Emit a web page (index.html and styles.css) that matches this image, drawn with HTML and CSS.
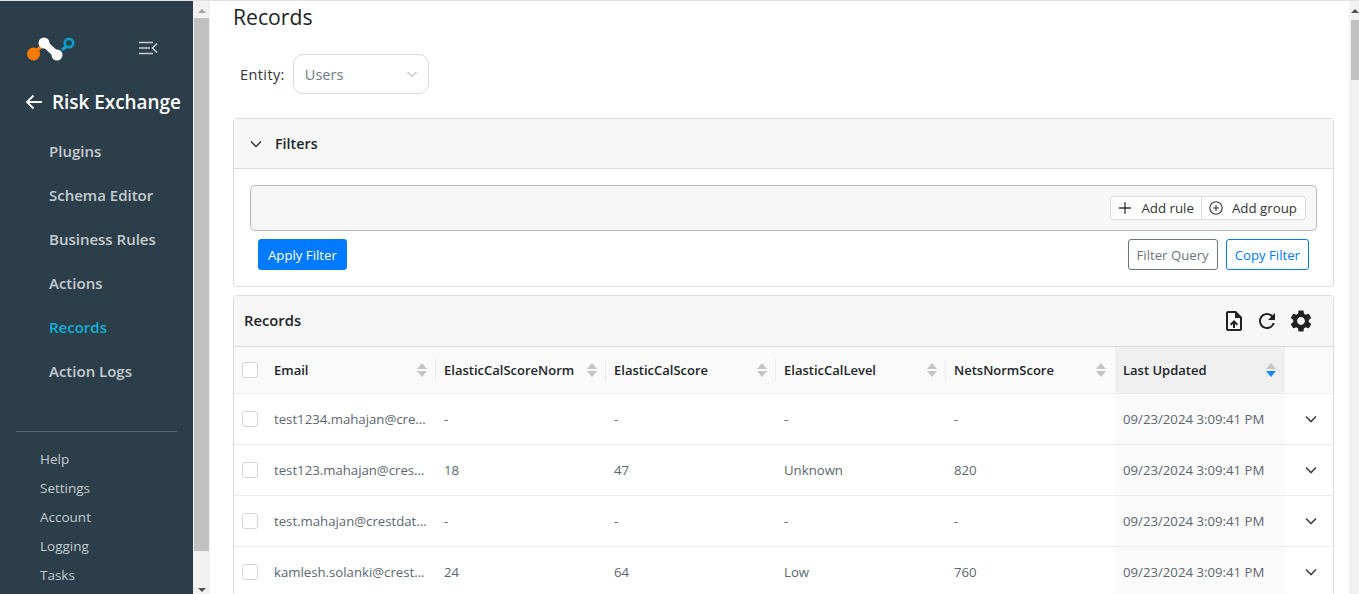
FILE: index.html
```html
<!DOCTYPE html>
<html>
<head>
    <title>Records</title>
    <link rel="stylesheet" href="styles.css">
</head>
<body>
    <div id="app">
        <div id="sidebar">
            <div class="brand">
                <svg class="logo" width="50" height="26" viewBox="0 0 50 26">
                    <path d="M7 19 L17 10" stroke="#f57c00" stroke-width="3.500" fill="none"/>
                    <circle cx="7.500" cy="19" r="6.500" fill="#f57c00"/>
                    <path d="M18 8 L31 20" stroke="#fff" stroke-width="7" fill="none"/>
                    <circle cx="18" cy="8" r="5.500" fill="#fff"/>
                    <circle cx="31" cy="20" r="5.500" fill="#fff"/>
                    <path d="M36 15 L41 11" stroke="#0a9cc4" stroke-width="3.500" fill="none"/>
                    <circle cx="43" cy="8" r="4.200" fill="none" stroke="#0a9cc4" stroke-width="2.800"/>
                </svg>
                <svg class="collapse" width="19" height="14" viewBox="0 0 19 14">
                    <path d="M0 1.500H14M0 7H11M0 12.500H14" stroke="#c9ced2" stroke-width="1.600" fill="none"/>
                    <path d="M18 2.500L13.500 7L18 11.500" stroke="#c9ced2" stroke-width="1.600" fill="none"/>
                </svg>
            </div>
            <div class="back">
                <svg width="18" height="16" viewBox="0 0 18 16">
                    <path d="M17 8H2M8.500 1.500L2 8L8.500 14.500" stroke="#fff" stroke-width="1.800" fill="none"/>
                </svg>
                <span>Risk Exchange</span>
            </div>
            <div class="nav">
                <a>Plugins</a>
                <a>Schema Editor</a>
                <a>Business Rules</a>
                <a>Actions</a>
                <a class="active">Records</a>
                <a>Action Logs</a>
            </div>
            <div class="subnav">
                <a>Help</a>
                <a>Settings</a>
                <a>Account</a>
                <a>Logging</a>
                <a>Tasks</a>
            </div>
        </div>
        <div class="scroll scroll-side">
            <span class="arrow-up"></span>
            <span class="thumb"></span>
            <span class="arrow-down"></span>
        </div>
        <div id="main">
            <h1>Records</h1>
            <div class="entity">
                <label>Entity:</label>
                <div class="select">
                    <span>Users</span>
                    <svg width="10" height="7" viewBox="0 0 10 7"><path d="M.5 1L5 5.500L9.500 1" stroke="#c4c4c4" stroke-width="1.100" fill="none"/></svg>
                </div>
            </div>

            <div class="card">
                <div class="card-head filters-head">
                    <svg width="12" height="8" viewBox="0 0 12 8"><path d="M1 1.500L6 6.500L11 1.500" stroke="#333" stroke-width="1.300" fill="none"/></svg>
                    <span>Filters</span>
                </div>
                <div class="filters-body">
                    <div class="query">
                        <div class="query-btns">
                            <button>
                                <svg width="14" height="14" viewBox="0 0 14 14"><path d="M7 1V13M1 7H13" stroke="#333" stroke-width="1.300"/></svg>
                                Add rule
                            </button>
                            <button>
                                <svg width="14" height="14" viewBox="0 0 14 14"><circle cx="7" cy="7" r="6.200" fill="none" stroke="#333" stroke-width="1.100"/><path d="M7 4V10M4 7H10" stroke="#333" stroke-width="1.100"/></svg>
                                Add group
                            </button>
                        </div>
                    </div>
                    <div class="filter-actions">
                        <button class="btn btn-primary">Apply Filter</button>
                        <div class="filter-right">
                            <button class="btn btn-grey">Filter Query</button>
                            <button class="btn btn-blue">Copy Filter</button>
                        </div>
                    </div>
                </div>
            </div>

            <div class="card records">
                <div class="card-head records-head">
                    <span>Records</span>
                    <div class="tools">
                        <svg width="24" height="24" viewBox="0 0 24 24"><path d="M14 2H6c-1.100 0-2 .9-2 2v16c0 1.100.9 2 2 2h12c1.100 0 2-.9 2-2V8l-6-6zm4 18H6V4h7v5h5v11zM8 15.010l1.410 1.410L11 14.840V19h2v-4.160l1.590 1.590L16 15.010 12.010 11z" fill="#212121"/></svg>
                        <svg width="24" height="24" viewBox="0 0 24 24"><path d="M17.650 6.350A7.958 7.958 0 0 0 12 4c-4.420 0-7.990 3.580-7.990 8s3.570 8 7.990 8c3.730 0 6.840-2.550 7.730-6h-2.080A5.990 5.990 0 0 1 12 18c-3.310 0-6-2.690-6-6s2.690-6 6-6c1.660 0 3.140.69 4.220 1.780L13 11h7V4l-2.350 2.350z" fill="#212121"/></svg>
                        <svg width="26" height="26" viewBox="0 0 24 24"><path d="M19.140 12.940c.04-.3.06-.61.06-.94 0-.32-.02-.64-.07-.94l2.030-1.580a.49.49 0 0 0 .12-.61l-1.920-3.320a.488.488 0 0 0-.59-.22l-2.390.96c-.5-.38-1.030-.7-1.620-.94l-.36-2.540a.484.484 0 0 0-.48-.41h-3.840c-.24 0-.43.17-.47.41l-.36 2.540c-.59.24-1.130.57-1.620.94l-2.390-.96c-.22-.08-.47 0-.59.22L2.740 8.870c-.12.21-.08.47.12.61l2.030 1.580c-.05.3-.09.63-.09.94s.02.64.07.94l-2.030 1.580a.49.49 0 0 0-.12.61l1.920 3.320c.12.22.37.29.59.22l2.390-.96c.5.38 1.030.7 1.620.94l.36 2.540c.05.24.24.41.48.41h3.840c.24 0 .44-.17.47-.41l.36-2.540c.59-.24 1.130-.56 1.620-.94l2.390.96c.22.08.47 0 .59-.22l1.920-3.320c.12-.22.07-.47-.12-.61l-2.010-1.580zM12 15.600c-1.980 0-3.600-1.620-3.600-3.600s1.620-3.600 3.600-3.600 3.600 1.620 3.600 3.600-1.620 3.600-3.600 3.600z" fill="#212121"/></svg>
                    </div>
                </div>
                <div class="row row-head">
                    <div class="cell cell-check"><span class="check"></span></div>
                    <div class="cell"><span>Email</span><i class="sort"></i></div>
                    <div class="cell"><span>ElasticCalScoreNorm</span><i class="sort"></i></div>
                    <div class="cell"><span>ElasticCalScore</span><i class="sort"></i></div>
                    <div class="cell"><span>ElasticCalLevel</span><i class="sort"></i></div>
                    <div class="cell"><span>NetsNormScore</span><i class="sort"></i></div>
                    <div class="cell cell-sorted"><span>Last Updated</span><i class="sort sort-down"></i></div>
                    <div class="cell cell-end"></div>
                </div>
                <div class="row">
                    <div class="cell cell-check"><span class="check"></span></div>
                    <div class="cell"><span class="clip">test1234.mahajan@cre...</span></div>
                    <div class="cell">-</div>
                    <div class="cell">-</div>
                    <div class="cell">-</div>
                    <div class="cell">-</div>
                    <div class="cell cell-sorted">09/23/2024 3:09:41 PM</div>
                    <div class="cell cell-end"><svg width="12" height="8" viewBox="0 0 12 8"><path d="M1 1.500L6 6.500L11 1.500" stroke="#444" stroke-width="1.600" fill="none"/></svg></div>
                </div>
                <div class="row">
                    <div class="cell cell-check"><span class="check"></span></div>
                    <div class="cell"><span class="clip">test123.mahajan@cres...</span></div>
                    <div class="cell">18</div>
                    <div class="cell">47</div>
                    <div class="cell">Unknown</div>
                    <div class="cell">820</div>
                    <div class="cell cell-sorted">09/23/2024 3:09:41 PM</div>
                    <div class="cell cell-end"><svg width="12" height="8" viewBox="0 0 12 8"><path d="M1 1.500L6 6.500L11 1.500" stroke="#444" stroke-width="1.600" fill="none"/></svg></div>
                </div>
                <div class="row">
                    <div class="cell cell-check"><span class="check"></span></div>
                    <div class="cell"><span class="clip">test.mahajan@crestdat...</span></div>
                    <div class="cell">-</div>
                    <div class="cell">-</div>
                    <div class="cell">-</div>
                    <div class="cell">-</div>
                    <div class="cell cell-sorted">09/23/2024 3:09:41 PM</div>
                    <div class="cell cell-end"><svg width="12" height="8" viewBox="0 0 12 8"><path d="M1 1.500L6 6.500L11 1.500" stroke="#444" stroke-width="1.600" fill="none"/></svg></div>
                </div>
                <div class="row">
                    <div class="cell cell-check"><span class="check"></span></div>
                    <div class="cell"><span class="clip">kamlesh.solanki@crest...</span></div>
                    <div class="cell">24</div>
                    <div class="cell">64</div>
                    <div class="cell">Low</div>
                    <div class="cell">760</div>
                    <div class="cell cell-sorted">09/23/2024 3:09:41 PM</div>
                    <div class="cell cell-end"><svg width="12" height="8" viewBox="0 0 12 8"><path d="M1 1.500L6 6.500L11 1.500" stroke="#444" stroke-width="1.600" fill="none"/></svg></div>
                </div>
            </div>
        </div>
        <div class="scroll scroll-main">
            <span class="arrow-up"></span>
            <span class="thumb"></span>
        </div>
    </div>
</body>
</html>
```

FILE: styles.css
```css
html, body{
    margin: 0;
    height: 100%;
    overflow: hidden;
    background-color: #fff;
    font-family: "Open Sans", "Noto Sans", sans-serif;
    color: #212529;
}
#app{
    display: flex;
    height: 593px;
    border-top: 1px solid #e2e2e2;
}

/* sidebar */
#sidebar{
    width: 193px;
    flex-shrink: 0;
    background-color: #2c3e4a;
    overflow: hidden;
}
.brand{
    display: flex;
    align-items: center;
    padding: 34px 0 0 26px;
    height: 26px;
}
.collapse{
    margin-left: 63px;
    margin-top: -1px;
}
.back{
    display: flex;
    align-items: center;
    gap: 9px;
    padding: 27px 0 0 25px;
    color: #fff;
    font-size: 18.900px;
    font-weight: 600;
    line-height: 28px;
}
.nav{
    display: flex;
    flex-direction: column;
    height: 316px;
    box-sizing: border-box;
    border-bottom: 1px solid #5b6a75;
    margin: 0 16px;
    padding: 13px 0 0 33px;
}
.nav a{
    height: 44px;
    line-height: 44px;
    font-size: 15px;
    font-weight: 600;
    color: #c5ccd0;
}
.nav a.active{
    color: #0fb0d8;
}
.subnav{
    display: flex;
    flex-direction: column;
    padding: 13px 0 0 40px;
}
.subnav a{
    height: 29px;
    line-height: 29px;
    font-size: 13.500px;
    color: #c5ccd0;
}

/* fake scrollbars, the shot has them frozen */
.scroll{
    flex-shrink: 0;
    background-color: #f1f1f1;
    display: flex;
    flex-direction: column;
    align-items: center;
}
.scroll-side{
    width: 17px;
}
.scroll-main{
    width: 10px;
    align-items: flex-end;
}
.thumb{
    display: block;
    background-color: #c1c1c1;
}
.scroll-side .thumb{
    width: 15px;
    height: 533px;
    margin-top: 5px;
}
.scroll-main .thumb{
    width: 8px;
    height: 60px;
    margin-top: 7px;
}
.arrow-up, .arrow-down{
    display: block;
    width: 0;
    height: 0;
    border-left: 4px solid transparent;
    border-right: 4px solid transparent;
}
.arrow-up{
    margin-top: 8px;
    border-bottom: 4px solid #a3a3a3;
}
.arrow-down{
    margin-top: 37px;
    border-top: 4px solid #505050;
}
.scroll-main .arrow-up{
    border-bottom-color: #505050;
}

/* main */
#main{
    flex: 1;
    min-width: 0;
    padding: 0 15px 0 23px;
    overflow: hidden;
}
h1{
    margin: 0;
    font-size: 21.200px;
    font-weight: 400;
    line-height: 32px;
}
.entity{
    display: flex;
    align-items: center;
    margin-top: 21px;
    padding-left: 7px;
    font-size: 14.500px;
    color: #333;
}
.entity label{
    margin-right: 8px;
    letter-spacing: .4px;
}
.select{
    height: 38px;
    border: 1px solid #d9d9d9;
    border-radius: 10px;
    display: flex;
    align-items: center;
    justify-content: space-between;
    padding: 0 11px;
    width: 112px;
    color: #6f7b84;
}
.card{
    border: 1px solid #dcdcdc;
    border-radius: 4px;
    margin-top: 24px;
    background-color: #fff;
}
.card-head{
    display: flex;
    align-items: center;
    background-color: #f7f7f7;
    border-bottom: 1px solid #dcdcdc;
    font-size: 14.300px;
    font-weight: 600;
}
.filters-head{
    height: 49px;
    gap: 13px;
    padding-left: 16px;
}
.filters-body{
    padding: 16px;
}
.query{
    display: flex;
    justify-content: flex-end;
    align-items: center;
    height: 44px;
    border: 1px solid #b8b8b8;
    border-radius: 5px;
    background-color: #f7f7f7;
    padding-right: 10px;
}
.query-btns{
    display: flex;
    border: 1px solid #dcdcdc;
    border-radius: 3px;
    background-color: #fff;
    height: 22px;
}
.query-btns button{
    display: flex;
    align-items: center;
    gap: 9px;
    border: 0;
    background: none;
    padding: 0 6px 0 7px;
    font-family: inherit;
    font-size: 13.300px;
    color: #333;
}
.query-btns button:first-child{
    padding-right: 7px;
}
.query-btns button + button{
    border-left: 1px solid #dcdcdc;
    padding-right: 8px;
}
.filter-actions{
    display: flex;
    justify-content: space-between;
    margin-top: 8px;
    padding: 0 8px;
}
.filter-right{
    display: flex;
    gap: 8px;
}
.btn{
    height: 31px;
    border-radius: 3px;
    font-family: inherit;
    font-size: 13.200px;
    padding: 0 8px;
    background-color: #fff;
    border: 1px solid #007bff;
}
.btn-primary{
    background-color: #007bff;
    color: #fff;
    padding: 0 9px;
}
.btn-grey{
    border-color: #6c757d;
    color: #6c757d;
}
.btn-blue{
    color: #007bff;
}
.records{
    margin-top: 8px;
}
.records-head{
    height: 50px;
    justify-content: space-between;
    padding: 0 19px 0 10px;
    font-size: 14.800px;
}
.records-head > span{
    margin-bottom: 2px;
}
.tools{
    display: flex;
    align-items: center;
    gap: 9px;
}

/* table */
.row{
    display: grid;
    grid-template-columns: 32px 170px 170px 170px 170px 169px 170px 48px;
    height: 50px;
    border-bottom: 1px solid #ececec;
    font-size: 13.200px;
    color: #5c6670;
}
.row-head{
    height: 46px;
    background-color: #fafafa;
    color: #212529;
    font-weight: 600;
    border-bottom: 1px solid #ececec;
    font-size: 13px;
}
.cell{
    display: flex;
    align-items: center;
    padding: 0 8px;
    position: relative;
    min-width: 0;
    white-space: nowrap;
}
.cell-check{
    padding: 0 0 0 8px;
}
.check{
    display: block;
    width: 14px;
    height: 14px;
    border: 1px solid #d4d4d4;
    border-radius: 3px;
    background-color: #fff;
}
.row-head .cell:not(.cell-check):not(.cell-end):not(:nth-child(2)):not(.cell-sorted)::before{
    content: "";
    position: absolute;
    left: -1px;
    top: 12px;
    height: 22px;
    border-left: 1px solid #ececec;
}
.cell-sorted{
    background-color: #fafafa;
}
.row-head .cell-sorted{
    background-color: #efefef;
}
.cell-end{
    justify-content: center;
    padding: 0 0 0 4px;
}
.sort{
    position: absolute;
    right: 9px;
    top: 16px;
    display: block;
    width: 0;
    height: 0;
    border-left: 5px solid transparent;
    border-right: 5px solid transparent;
    border-bottom: 6px solid #c4c4c4;
}
.sort::after{
    content: "";
    position: absolute;
    left: -5px;
    top: 8px;
    width: 0;
    height: 0;
    border-left: 5px solid transparent;
    border-right: 5px solid transparent;
    border-top: 6px solid #c4c4c4;
}
.sort-down::after{
    border-top-color: #1e88e5;
}
```
